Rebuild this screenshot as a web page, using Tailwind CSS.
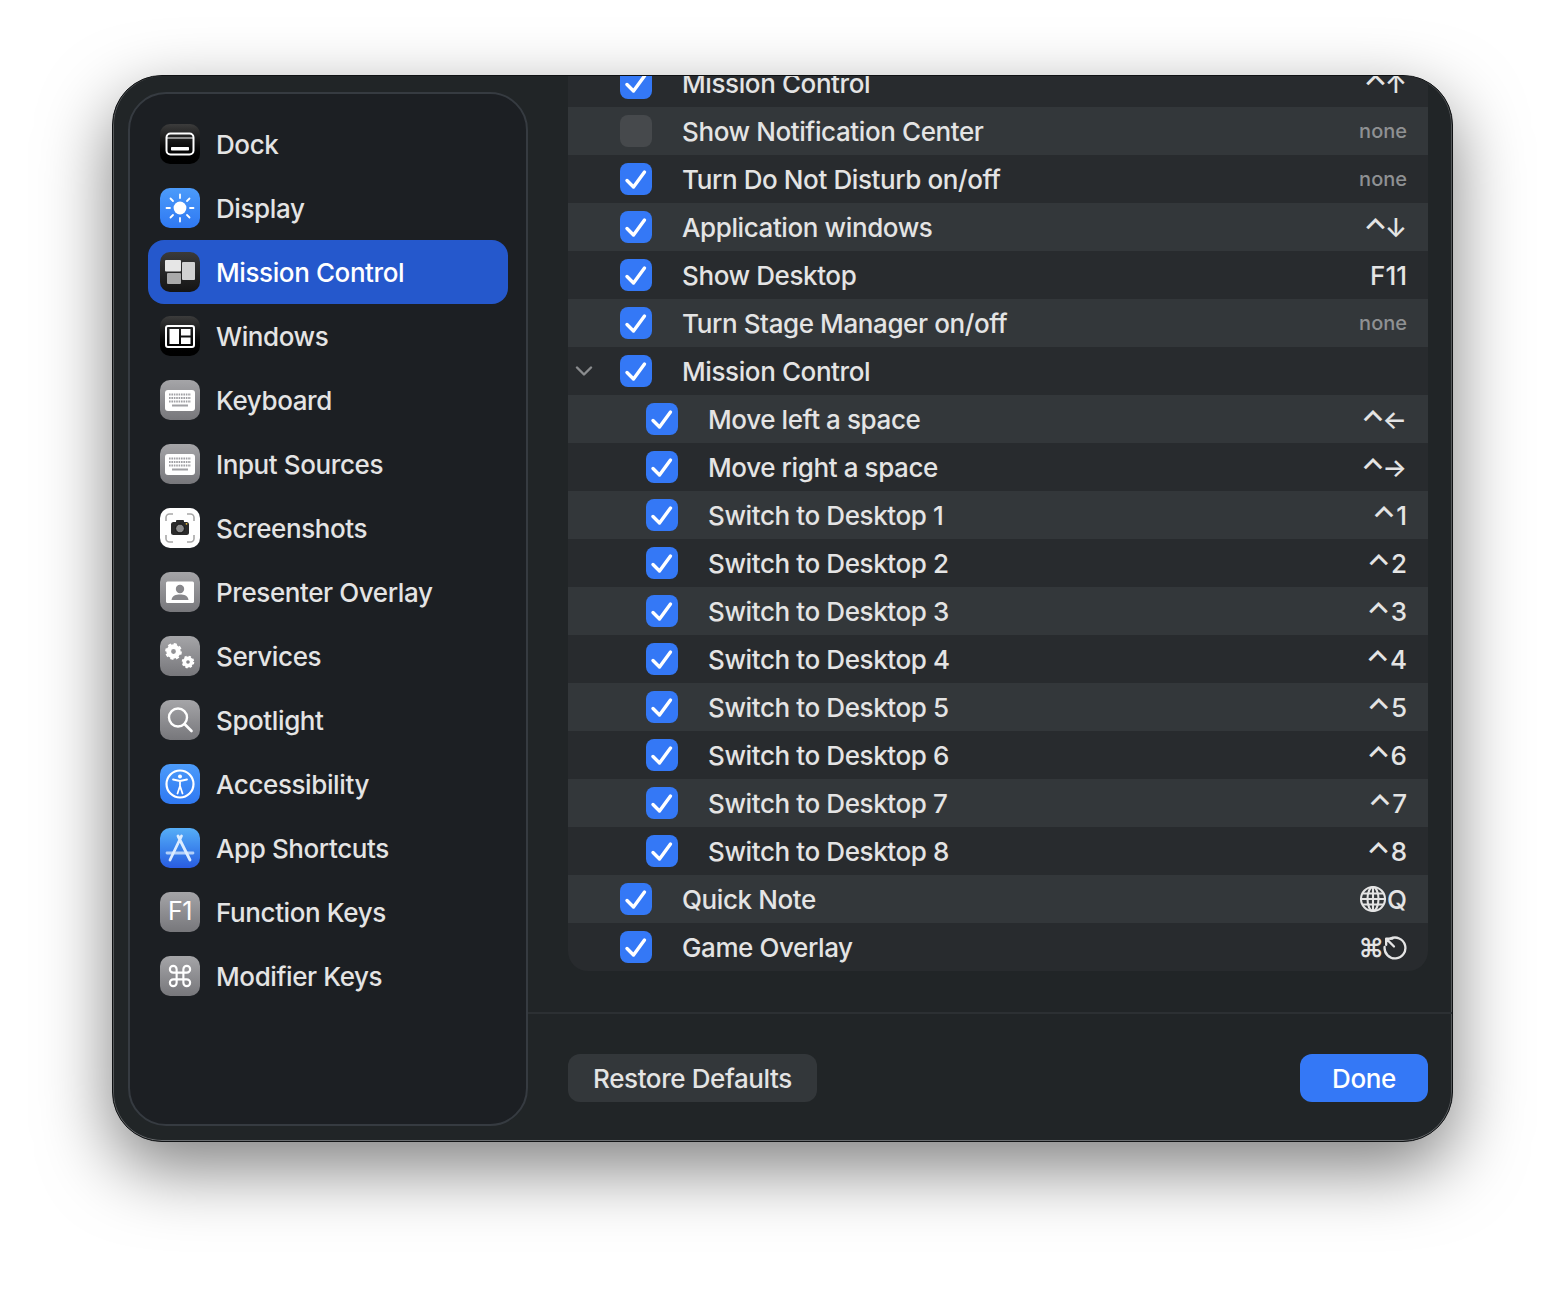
<!DOCTYPE html>
<html lang="en">
<head>
  <meta charset="UTF-8">
  <meta name="viewport" content="width=device-width, initial-scale=1.0">
  <script src="https://cdn.jsdelivr.net/npm/@tailwindcss/browser@4"></script>
  <title>Keyboard Shortcuts</title>
</head>
<body class="bg-white font-['Inter',sans-serif] overflow-hidden">
  <div class="w-[1564px] h-[1290px] pt-[75px] pl-[112px]">
    <!-- Window -->
    <div class="flex w-[1341px] h-[1067px] rounded-[50px] bg-[#212527] border border-[#101214] shadow-[0_26px_70px_rgba(0,0,0,0.5),inset_0_-1px_0_#6a6d70,inset_1px_0_0_#55585a,inset_-1px_0_0_#55585a] overflow-hidden">
      <!-- Sidebar -->
      <aside class="ml-[15px] mt-[16px] w-[400px] h-[1034px] shrink-0 rounded-[38px] bg-[#1c1f23] border-2 border-[#363b41] pt-[18px] px-[18px]">
        <ul id="sidebar" class="flex flex-col"></ul>
      </aside>

      <!-- Main -->
      <main class="flex-1 flex flex-col min-w-0">
        <div class="h-[938px] pl-[40px] pr-[24px] overflow-hidden border-b-2 border-[#2c3033]">
          <div id="rows" class="-mt-[17px] rounded-b-[20px] overflow-hidden"></div>
        </div>
        <div class="flex justify-between pl-[40px] pr-[24px] pt-[40px]">
          <button class="w-[249px] h-[48px] rounded-[12px] bg-[#33373a] text-[#e4e4e4] text-[26px] font-[450] tracking-[-0.4px]">Restore Defaults</button>
          <button class="w-[128px] h-[48px] rounded-[12px] bg-[#3478f6] text-white text-[26px] font-[450] tracking-[-0.4px]">Done</button>
        </div>
      </main>
    </div>
  </div>

  <script>
    const gray = 'bg-linear-to-b from-[#a5a5a8] to-[#77777b]';
    const black = 'bg-linear-to-b from-[#3c3c3c] to-[#000000]';
    const blue = 'bg-linear-to-b from-[#4c9bfa] to-[#2f78f2]';

    const keyboard = `
      <rect x="5" y="10" width="30" height="21" rx="3" fill="#fff"/>
      <path d="M9 14.5H31M9 18H31M9 21.5H31" stroke="#a0a0a4" stroke-width="2.2" stroke-dasharray="1.6 .8"/>
      <path d="M12 25.5H28" stroke="#a0a0a4" stroke-width="2.2"/>`;

    // body ring plus eight teeth
    const gear = (cx, cy, r) => `
      <circle cx="${cx}" cy="${cy}" r="${r * .6}" fill="none" stroke="#fff" stroke-width="${r * .6}"/>
      <circle cx="${cx}" cy="${cy}" r="${r * .9}" fill="none" stroke="#fff" stroke-width="${r * .3}" stroke-dasharray="${r * .38} ${r * .327}"/>`;

    const sidebar = [
      { name: 'Dock', tile: black, svg: `
        <rect x="6.5" y="9.5" width="27" height="21" rx="4" fill="none" stroke="#fff" stroke-width="2"/>
        <path d="M7 14H33" stroke="#fff" stroke-width="1"/>
        <rect x="11" y="23" width="18" height="3.6" rx=".8" fill="#fff"/>` },
      { name: 'Display', tile: blue, svg: `
        <circle cx="20" cy="20" r="6.4" fill="#fff"/>
        <path d="M20 6.5V10M20 30V33.5M6.5 20H10M30 20H33.5M10.5 10.5L13 13M27 27L29.5 29.5M10.5 29.5L13 27M27 13L29.5 10.5" stroke="#fff" stroke-width="1.8" stroke-linecap="round"/>` },
      { name: 'Mission Control', active: true, tile: 'bg-linear-to-b from-[#3a3a3a] to-[#141414]', svg: `
        <rect x="5" y="8" width="16" height="11.5" rx="1" fill="#e6e6e6"/>
        <rect x="7" y="21" width="14" height="11" rx="1" fill="#a9a9a9"/>
        <rect x="22" y="10" width="13" height="18" rx="1" fill="#d2d2d2"/>` },
      { name: 'Windows', tile: black, svg: `
        <rect x="6" y="10" width="28" height="21" rx="2" fill="none" stroke="#fff" stroke-width="2"/>
        <rect x="9.5" y="13" width="9.5" height="15" fill="#fff"/>
        <rect x="21" y="13" width="9.5" height="6.5" fill="#fff"/>
        <rect x="21" y="21.5" width="9.5" height="6.5" fill="#fff"/>` },
      { name: 'Keyboard', tile: gray, svg: keyboard },
      { name: 'Input Sources', tile: gray, svg: keyboard },
      { name: 'Screenshots', tile: 'bg-white', svg: `
        <path d="M6 13V9.5A3.5 3.5 0 0 1 9.5 6H13M27 6H30.5A3.5 3.5 0 0 1 34 9.5V13M34 27V30.5A3.5 3.5 0 0 1 30.5 34H27M13 34H9.5A3.5 3.5 0 0 1 6 30.5V27" fill="none" stroke="#a8a8a8" stroke-width="1.6"/>
        <rect x="11" y="14" width="18" height="13" rx="2.5" fill="#2b2b2b"/>
        <rect x="16" y="12" width="8" height="3" rx="1" fill="#2b2b2b"/>
        <circle cx="20" cy="20.5" r="4.4" fill="#8c8c8c" stroke="#111" stroke-width="1"/>
        <circle cx="26.5" cy="15.8" r=".9" fill="#f5c542"/>` },
      { name: 'Presenter Overlay', tile: gray, svg: `
        <rect x="6" y="9.5" width="28" height="21.5" rx="1.5" fill="#fff"/>
        <circle cx="20" cy="17" r="4.2" fill="#87878b"/>
        <path d="M11.5 28C12 23.5 16 22.5 20 22.5S28 23.5 28.500 28Z" fill="#87878b"/>` },
      { name: 'Services', tile: gray, svg: gear(13.5, 15.5, 8) + gear(28, 26, 6) },
      { name: 'Spotlight', tile: gray, svg: `
        <circle cx="18" cy="17.500" r="9" fill="none" stroke="#fff" stroke-width="2.400"/>
        <path d="M24.500 24L31.500 31" stroke="#fff" stroke-width="2.600" stroke-linecap="round"/>` },
      { name: 'Accessibility', tile: blue, svg: `
        <circle cx="20" cy="20" r="13.500" fill="none" stroke="#fff" stroke-width="2.200"/>
        <circle cx="20" cy="12.500" r="2" fill="#fff"/>
        <path d="M13 15.500L20 17L27 15.500M20 17V22M20 22L17.500 29.500M20 22L22.500 29.500" fill="none" stroke="#fff" stroke-width="1.800" stroke-linecap="round"/>` },
      { name: 'App Shortcuts', tile: 'bg-linear-to-b from-[#57aef7] to-[#2a5be0]', svg: `
        <path d="M21.500 8L10 32M18 8L30 32" stroke="#dcecff" stroke-width="2.800" stroke-linecap="round"/>
        <path d="M7 25H33" stroke="#dcecff" stroke-opacity=".75" stroke-width="2.800" stroke-linecap="round"/>` },
      { name: 'Function Keys', tile: gray, label: 'F1' },
      { name: 'Modifier Keys', tile: gray, svg: `
        <g transform="translate(6.500 6.500) scale(1.125)"><path d="M15 6v12a3 3 0 1 0 3-3H6a3 3 0 1 0 3 3V6a3 3 0 1 0-3 3h12a3 3 0 1 0-3-3" fill="none" stroke="#fff" stroke-width="1.900"/></g>` },
    ];

    document.getElementById('sidebar').innerHTML = sidebar.map(item => `
      <li class="flex items-center gap-[16px] h-[64px] pl-[12px] rounded-[16px] text-[26px] font-[450] tracking-[-0.4px] ${item.active ? 'bg-[#2558cc] text-white' : 'text-[#e4e4e4]'}">
        <span class="flex items-center justify-center w-[40px] h-[40px] shrink-0 rounded-[10px] overflow-hidden text-[25px] font-normal text-white ${item.tile}">
          ${item.label ? item.label : `<svg width="40" height="40" viewBox="0 0 40 40">${item.svg}</svg>`}
        </span>
        <span>${item.name}</span>
      </li>`).join('');

    // Shortcut keys are ordinary characters, apart from the globe and the restart symbol
    const ctrl = '<span class="text-[31px] leading-none font-medium pt-[5px]">⌃</span>';
    const ctrlTight = '<span class="text-[31px] leading-none font-medium pt-[5px] -mr-[3px]">⌃</span>';
    const cmd = '<span class="font-semibold -mr-[2px]">⌘</span>';
    const globe = `<svg width="28" height="28" viewBox="0 0 28 28" fill="none" stroke="#e4e4e4" stroke-width="2.100">
      <circle cx="14" cy="14" r="12"/><ellipse cx="14" cy="14" rx="5.500" ry="12"/>
      <path d="M14 2V26M2.500 14H25.500M4 8.500H24M4 19.500H24"/></svg>`;
    const restart = `<svg width="25" height="25" viewBox="0 0 24 24" fill="none" stroke="#e4e4e4" stroke-width="2.200" stroke-linecap="round" stroke-linejoin="round">
      <path d="M8 3.500A10 10 0 1 1 2.500 11.500"/><path d="M4 9.500V3.500H10M4 3.500L11.500 11"/></svg>`;

    const rows = [
      { label: 'Mission Control', keys: ctrlTight + '↑' },
      { label: 'Show Notification Center', none: true, off: true },
      { label: 'Turn Do Not Disturb on/off', none: true },
      { label: 'Application windows', keys: ctrlTight + '↓' },
      { label: 'Show Desktop', keys: 'F11' },
      { label: 'Turn Stage Manager on/off', none: true },
      { label: 'Mission Control', open: true },
      { label: 'Move left a space', sub: true, keys: ctrlTight + '←' },
      { label: 'Move right a space', sub: true, keys: ctrlTight + '→' },
      { label: 'Switch to Desktop 1', sub: true, keys: ctrl + '1' },
      { label: 'Switch to Desktop 2', sub: true, keys: ctrl + '2' },
      { label: 'Switch to Desktop 3', sub: true, keys: ctrl + '3' },
      { label: 'Switch to Desktop 4', sub: true, keys: ctrl + '4' },
      { label: 'Switch to Desktop 5', sub: true, keys: ctrl + '5' },
      { label: 'Switch to Desktop 6', sub: true, keys: ctrl + '6' },
      { label: 'Switch to Desktop 7', sub: true, keys: ctrl + '7' },
      { label: 'Switch to Desktop 8', sub: true, keys: ctrl + '8' },
      { label: 'Quick Note', keys: globe + 'Q' },
      { label: 'Game Overlay', keys: cmd + restart },
    ];

    document.getElementById('rows').innerHTML = rows.map((row, i) => `
      <div class="flex items-center h-[48px] pr-[21px] ${i % 2 ? 'bg-[#33373a]' : 'bg-[#282b2e]'}">
        <span class="flex items-center w-[52px] pl-[7px] shrink-0">
          ${row.open ? `<svg width="18" height="10" viewBox="0 0 18 10" fill="none" stroke="#8a8c8e" stroke-width="2.400" stroke-linecap="round" stroke-linejoin="round"><path d="M2 1.500L9 8.500L16 1.500"/></svg>` : ''}
        </span>
        <span class="flex items-center justify-center w-[32px] h-[32px] shrink-0 rounded-[8px] ${row.sub ? 'ml-[26px]' : ''} ${row.off ? 'bg-[#46494c]' : 'bg-[#3478f6]'}">
          ${row.off ? '' : `<svg width="32" height="32" viewBox="0 0 32 32" fill="none" stroke="#fff" stroke-width="3.400" stroke-linecap="round" stroke-linejoin="round"><path d="M7 17.500L13.500 24L24.500 9"/></svg>`}
        </span>
        <span class="ml-[30px] flex-1 text-[26px] font-[450] tracking-[-0.4px] text-[#e4e4e4]">${row.label}</span>
        ${row.none ? '<span class="text-[20px] font-medium text-[#8f9193]">none</span>' : ''}
        ${row.keys ? `<span class="flex items-center text-[26px] font-[450] text-[#e4e4e4]">${row.keys}</span>` : ''}
      </div>`).join('');
  </script>
</body>
</html>
